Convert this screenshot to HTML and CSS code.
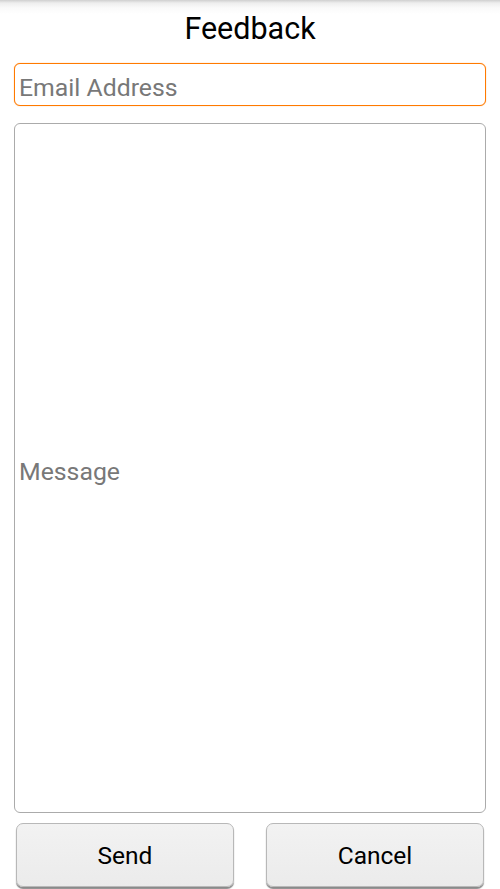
FILE: index.html
```html
<!DOCTYPE html>
<html lang="en">
<head>
  <meta charset="UTF-8" />
  <title>Feedback</title>
  <link rel="stylesheet" href="styles.css">
</head>
<body>
  <div class="feedback-screen">
    <h1 class="title">Feedback</h1>

    <input type="email" class="email-input" placeholder="Email Address" />

    <div class="message-box">
      <span class="placeholder">Message</span>
    </div>

    <div class="button-row">
      <button class="btn">Send</button>
      <button class="btn">Cancel</button>
    </div>
  </div>
</body>
</html>
```

FILE: styles.css
```css
body {
  margin: 0;
  background: #fff;
  font-family: Roboto, "Noto Sans", sans-serif;
}

.feedback-screen {
  height: 889px;
  box-sizing: border-box;
  padding: 0 14px;
  display: flex;
  flex-direction: column;
  background: linear-gradient(to bottom, #cfcfcf 0, #eeeeee 3px, #fafafa 8px, #fff 14px);
}

.title {
  margin: 0;
  height: 63px;
  line-height: 58px;
  text-align: center;
  font-size: 30.5px;
  font-weight: normal;
  color: #000;
}

.email-input {
  height: 43px;
  box-sizing: border-box;
  padding: 5px 4px 0;
  border: 1px solid #ff7a00;
  box-shadow: 0 0 1px #ff9a40;
  border-radius: 6px;
  font-family: inherit;
  font-size: 24.8px;
  color: #000;
  outline: none;
}

.email-input::placeholder {
  color: #787878;
}

.message-box {
  margin-top: 17px;
  height: 690px;
  box-sizing: border-box;
  padding: 7px 4px 0;
  border: 1px solid #ababab;
  border-radius: 6px;
  display: flex;
  align-items: center;
}

.placeholder {
  font-size: 24.8px;
  color: #787878;
}

.button-row {
  margin-top: 10px;
  padding: 0 2px;
  display: flex;
  gap: 32px;
}

.btn {
  flex: 1;
  height: 64px;
  border: 1px solid #b8b8b8;
  border-radius: 7px;
  background: linear-gradient(to bottom, #f2f2f2, #ebebeb);
  box-shadow: 0 2px 1px #8a8a8a;
  font-family: inherit;
  font-size: 24.5px;
  color: #000;
  padding: 1px 0 0;
}
```
